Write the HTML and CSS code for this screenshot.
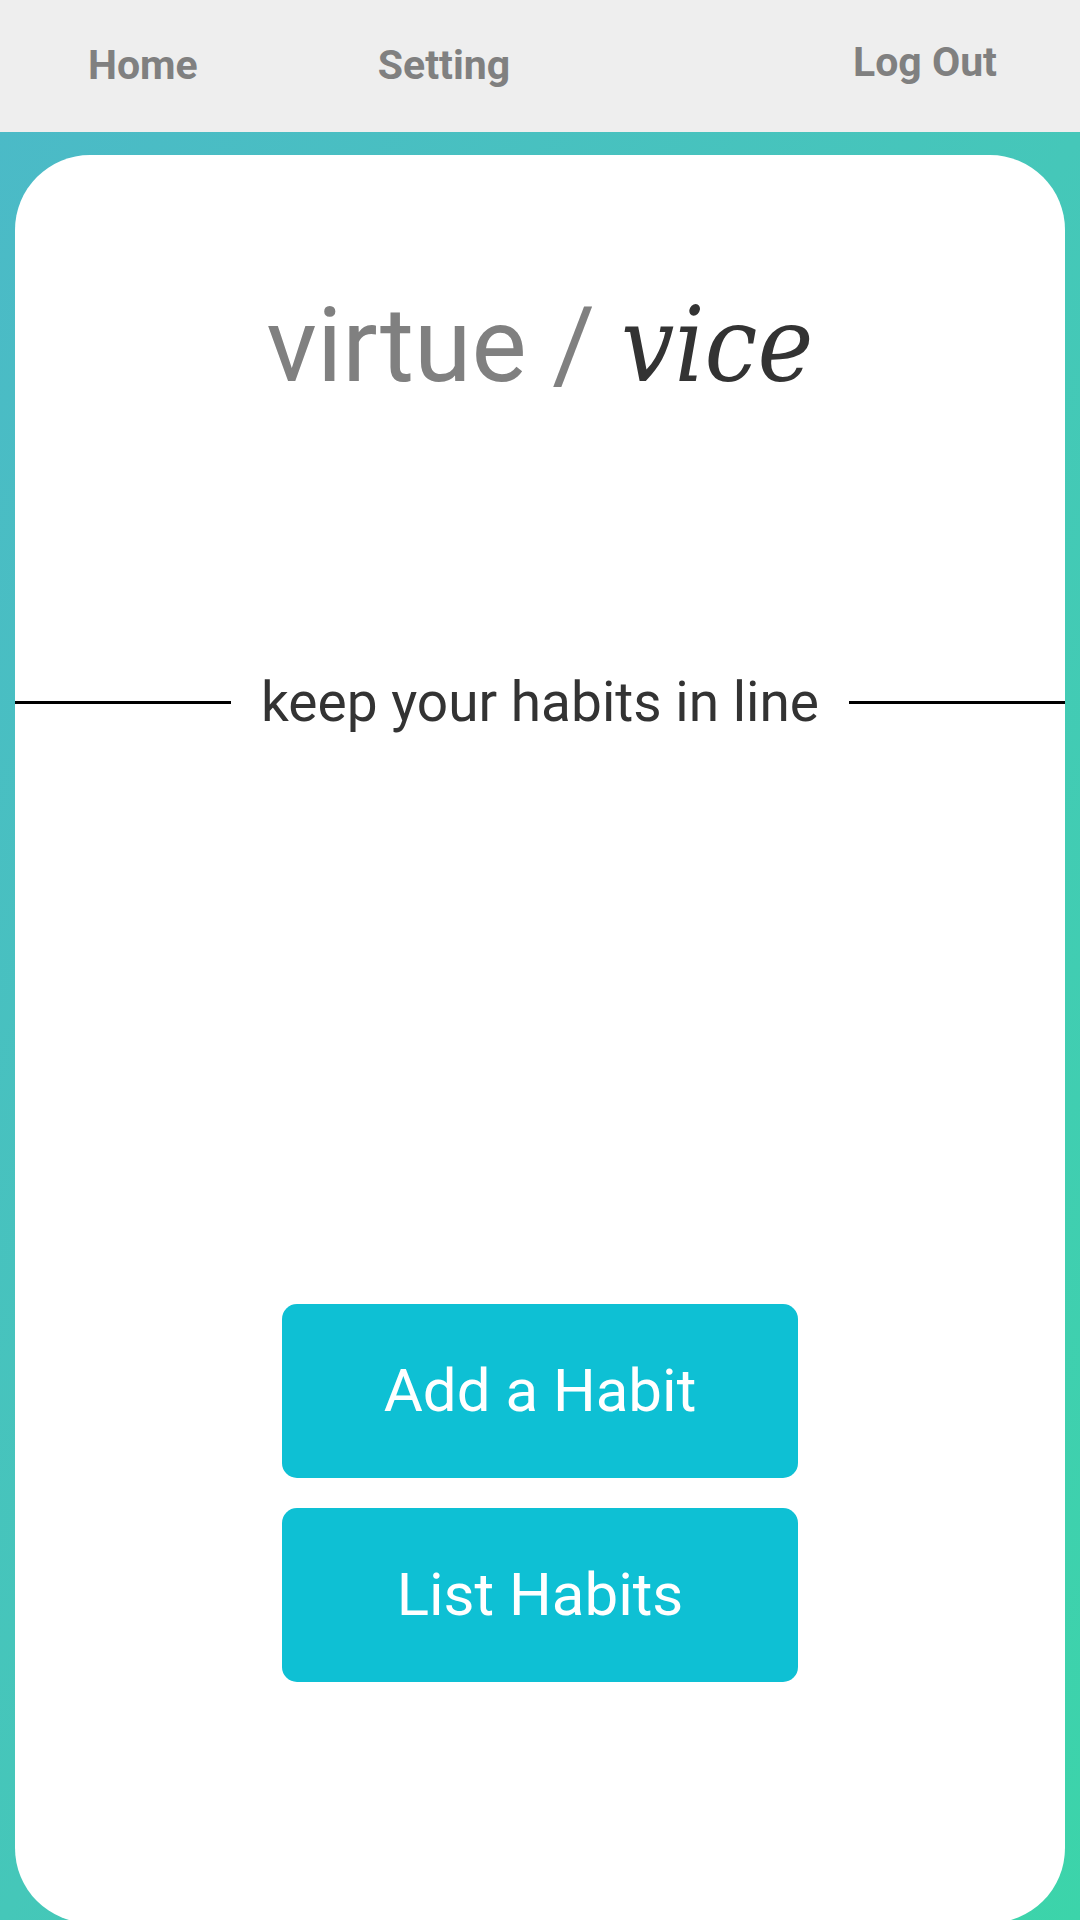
FILE: index.html
```html
<!DOCTYPE html>
<html lang="en">
<head>
<meta charset="utf-8">
<title>virtue / vice</title>
<link rel="stylesheet" href="styles.css">
</head>
<body>
  <nav class="nav">
    <a class="nav-link nav-home" href="#">Home</a>
    <a class="nav-link nav-setting" href="#">Setting</a>
    <a class="nav-link nav-logout" href="#">Log Out</a>
  </nav>
  <main class="stage">
    <section class="card">
      <h1 class="title"><span class="virtue">virtue /</span> <span class="vice">vice</span></h1>
      <div class="tagline">
        <span class="rule"></span>
        <span class="tagline-text">keep your habits in line</span>
        <span class="rule"></span>
      </div>
      <div class="actions">
        <button class="btn">Add a Habit</button>
        <button class="btn">List Habits</button>
      </div>
    </section>
  </main>
</body>
</html>
```

FILE: styles.css
```css
html, body {
  margin: 0;
  padding: 0;
  height: 1920px;
  overflow: hidden;
}

body {
  font-family: Roboto, "Noto Sans", Arial, sans-serif;
  background: #eeeeee;
}

.nav {
  height: 132px;
  background: #eeeeee;
  display: flex;
  align-items: center;
  padding: 0 83px 0 88px;
  box-sizing: border-box;
}

.nav-link {
  font-family: Roboto, sans-serif;
  font-weight: 700;
  font-size: 41px;
  color: #808080;
  text-decoration: none;
  line-height: 1.2;
}

.nav-setting {
  margin-left: 180px;
}

.nav-logout {
  margin-left: auto;
  margin-bottom: 6px;
}

.stage {
  height: 1788px;
  box-sizing: border-box;
  padding: 23px 15px 0 15px;
  background: linear-gradient(to bottom right, #4bbac7 0%, #45c7b9 50%, #3cd4aa 100%);
}

.card {
  height: 1768px;
  background: #ffffff;
  border-radius: 75px;
  display: flex;
  flex-direction: column;
  align-items: center;
  padding-top: 127px;
  box-sizing: border-box;
}

.title {
  margin: 0;
  font-weight: 400;
  font-size: 104px;
  line-height: 1.2;
  color: #808080;
  white-space: nowrap;
}

.virtue {
  font-family: Roboto, sans-serif;
}

.vice {
  font-family: "DejaVu Serif Condensed", "DejaVu Serif", serif;
  font-style: italic;
  font-size: 105px;
  color: #333333;
}

.tagline {
  align-self: stretch;
  display: flex;
  align-items: center;
  gap: 30px;
  margin-top: 260px;
}

.rule {
  flex: 1;
  height: 3px;
  background: #000000;
  margin-top: 1px;
}

.tagline-text {
  font-family: Roboto, sans-serif;
  font-size: 55px;
  line-height: 1.2;
  color: #333333;
  white-space: nowrap;
}

.actions {
  margin-top: 569px;
  display: flex;
  flex-direction: column;
  gap: 30px;
}

.btn {
  width: 516px;
  height: 174px;
  border: none;
  border-radius: 15px;
  background: #0ec0d4;
  color: #ffffff;
  font-family: Roboto, sans-serif;
  font-size: 60px;
  font-weight: 400;
  padding: 0;
  cursor: pointer;
}
```
